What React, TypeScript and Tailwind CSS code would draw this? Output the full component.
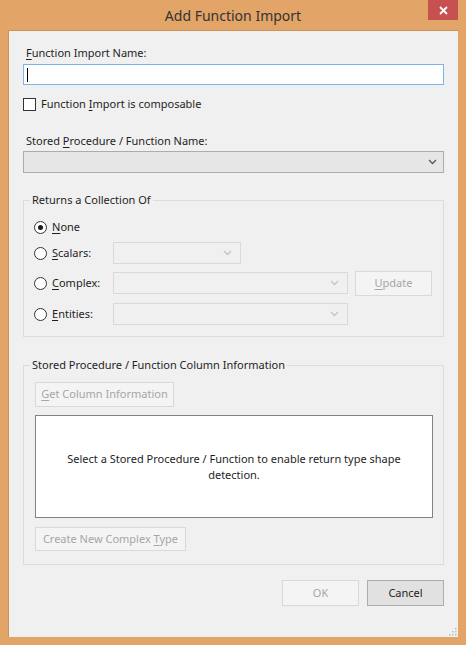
import React from "react";

const font = { fontFamily: '"Noto Sans", "Open Sans", sans-serif' };

function Chevron({ disabled }: { disabled?: boolean }) {
  return (
    <svg width="9" height="6" viewBox="0 0 9 6" className="shrink-0">
      <path d="M1 1 L4.5 4.5 L8 1" fill="none" stroke={disabled ? "#c4c4c4" : "#555"} strokeWidth="1.3" />
    </svg>
  );
}

function Radio({ checked }: { checked?: boolean }) {
  return (
    <span className="w-[13px] h-[13px] rounded-full border border-[#333] bg-white flex items-center justify-center shrink-0">
      {checked && <span className="w-[5px] h-[5px] rounded-full bg-[#1a1a1a]" />}
    </span>
  );
}

function DisabledSelect({ w }: { w: string }) {
  return (
    <div className={`${w} h-[22px] border border-[#d9d9d9] bg-[#f0f0f0] flex items-center justify-end pr-[8px]`}>
      <Chevron disabled />
    </div>
  );
}

function U({ children }: { children: React.ReactNode }) {
  return <span className="underline underline-offset-2 decoration-1">{children}</span>;
}

export default function App() {
  return (
    <div className="w-[466px] h-[645px] bg-[#e3a468] flex flex-col text-[11px] text-[#1e1e1e] whitespace-nowrap" style={font}>
      <div className="h-[30px] flex items-center justify-center relative shrink-0">
        <span className="text-[14px] text-[#333]">Add Function Import</span>
        <div className="absolute right-[8px] top-0 w-[30px] h-[20px] bg-[#c75050] flex items-center justify-center">
          <svg width="9" height="9" viewBox="0 0 9 9">
            <path d="M1 1 L8 8 M8 1 L1 8" stroke="#fff" strokeWidth="1.8" />
          </svg>
        </div>
      </div>
      <div className="mx-[8px] mb-[8px] flex-1 bg-[#f0f0f0] border-t border-l border-[#c9935f] flex flex-col pl-[14px] relative">
        <div className="h-[16px] mt-[14px] pl-[3px] leading-[16px]">
          <U>F</U>unction Import Name:
        </div>
        <div className="mt-[3px] h-[21px] w-[421px] bg-white border border-[#7eb4ea] flex items-center pl-[3px]">
          <span className="w-[1px] h-[14px] bg-black" />
        </div>
        <div className="mt-[12px] flex items-center h-[14px]">
          <span className="w-[13px] h-[13px] border border-[#333] bg-white shrink-0" />
          <span className="ml-[5px] leading-[14px]">
            Function <U>I</U>mport is composable
          </span>
        </div>
        <div className="mt-[22px] h-[16px] pl-[3px] leading-[16px]">
          Stored <U>P</U>rocedure / Function Name:
        </div>
        <div className="mt-[2px] h-[22px] w-[421px] border border-[#acacac] bg-[#e6e6e6] flex items-center justify-end pr-[6px]">
          <Chevron />
        </div>

        <div className="mt-[27px] w-[421px] h-[137px] border border-[#dcdcdc] relative flex flex-col pl-[10px]">
          <span className="absolute -top-[9px] left-[6px] px-[2px] bg-[#f0f0f0] leading-[16px]">Returns a Collection Of</span>
          <div className="mt-[18px] flex items-center h-[16px]">
            <Radio checked />
            <span className="ml-[5px]">
              <U>N</U>one
            </span>
          </div>
          <div className="mt-[7px] flex items-center h-[22px]">
            <Radio />
            <span className="ml-[5px] w-[61px]">
              <U>S</U>calars:
            </span>
            <DisabledSelect w="w-[128px]" />
          </div>
          <div className="mt-[7px] flex items-center h-[24px]">
            <Radio />
            <span className="ml-[5px] w-[61px]">
              <U>C</U>omplex:
            </span>
            <DisabledSelect w="w-[235px]" />
            <div className="ml-[7px] w-[77px] h-[25px] border border-[#d9d9d9] bg-[#f4f4f4] flex items-center justify-center text-[#a6a6a6]">
              <span>
                <U>U</U>pdate
              </span>
            </div>
          </div>
          <div className="mt-[8px] flex items-center h-[22px]">
            <Radio />
            <span className="ml-[5px] w-[61px]">
              <U>E</U>ntities:
            </span>
            <DisabledSelect w="w-[235px]" />
          </div>
        </div>

        <div className="mt-[28px] w-[421px] h-[200px] border border-[#dcdcdc] relative flex flex-col pl-[11px]">
          <span className="absolute -top-[9px] left-[6px] px-[2px] bg-[#f0f0f0] leading-[16px]">
            Stored Procedure / Function Column Information
          </span>
          <div className="mt-[16px] w-[139px] h-[25px] border border-[#d9d9d9] bg-[#f4f4f4] flex items-center justify-center text-[#a6a6a6]">
            <span>
              <U>G</U>et Column Information
            </span>
          </div>
          <div className="mt-[8px] w-[398px] h-[103px] bg-white border border-[#828282] flex items-center justify-center text-center px-[28px] leading-[16px] whitespace-normal">
            Select a Stored Procedure / Function to enable return type shape detection.
          </div>
          <div className="mt-[9px] w-[151px] h-[24px] border border-[#d9d9d9] bg-[#f4f4f4] flex items-center justify-center text-[#a6a6a6]">
            <span>
              Create New Complex <U>T</U>ype
            </span>
          </div>
        </div>

        <div className="mt-[15px] flex justify-end gap-[8px] w-[421px]">
          <div className="w-[77px] h-[26px] border border-[#d9d9d9] bg-[#f4f4f4] flex items-center justify-center text-[#a6a6a6]">OK</div>
          <div className="w-[77px] h-[26px] border border-[#adadad] bg-[#e1e1e1] flex items-center justify-center">Cancel</div>
        </div>

        <svg className="absolute right-[1px] bottom-[1px]" width="8" height="8" viewBox="0 0 8 8">
          <rect x="6" y="0" width="1.5" height="1.5" fill="#bbb" />
          <rect x="3" y="3" width="1.5" height="1.5" fill="#bbb" />
          <rect x="6" y="3" width="1.5" height="1.5" fill="#bbb" />
          <rect x="0" y="6" width="1.5" height="1.5" fill="#bbb" />
          <rect x="3" y="6" width="1.5" height="1.5" fill="#bbb" />
          <rect x="6" y="6" width="1.5" height="1.5" fill="#bbb" />
        </svg>
      </div>
    </div>
  );
}
